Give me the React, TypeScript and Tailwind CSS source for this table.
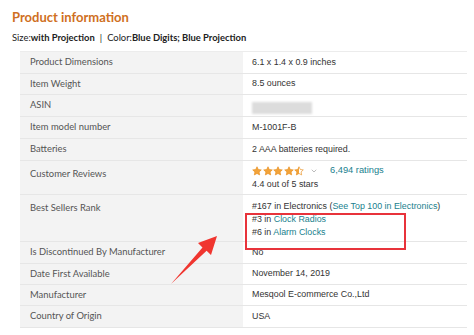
import { ChevronDown } from 'lucide-react'

type Row = { label: string; value: React.ReactNode; h: string }

function Star({ fill }: { fill: number }) {
  const id = `s${Math.round(fill * 100)}`
  return (
    <svg width="10" height="10" viewBox="0 0 24 24">
      <defs>
        <linearGradient id={id}>
          <stop offset={`${fill * 100}%`} stopColor="#f2a33a" />
          <stop offset={`${fill * 100}%`} stopColor="#ffffff" />
        </linearGradient>
      </defs>
      <path
        d="M12 1.8l3.1 6.6 7.2.9-5.3 5 1.4 7.1L12 17.9l-6.4 3.5 1.4-7.1-5.3-5 7.2-.9z"
        fill={`url(#${id})`}
        stroke="#e88f1f"
        strokeWidth="1.6"
        strokeLinejoin="round"
      />
    </svg>
  )
}

const link = 'text-[#1a7f8e]'

export default function App() {
  const rows: Row[] = [
    { label: 'Product Dimensions', value: '6.1 x 1.4 x 0.9 inches', h: 'h-[22px]' },
    { label: 'Item Weight', value: '8.5 ounces', h: 'h-[21px]' },
    {
      label: 'ASIN',
      value: <span className="block w-[60px] h-[12px] mt-[4px] bg-[#dcdcdc] blur-[1px]" />,
      h: 'h-[22px]',
    },
    { label: 'Item model number', value: 'M-1001F-B', h: 'h-[22px]' },
    { label: 'Batteries', value: '2 AAA batteries required.', h: 'h-[22px]' },
    {
      label: 'Customer Reviews',
      value: (
        <div className="pt-[4px]">
          <div className="flex items-center h-[12px]">
            <div className="flex gap-[0.5px]">
              <Star fill={1} />
              <Star fill={1} />
              <Star fill={1} />
              <Star fill={1} />
              <Star fill={0.5} />
            </div>
            <ChevronDown className="w-[8px] h-[8px] text-[#999] ml-[6px]" strokeWidth={2} />
            <span className={`${link} ml-[12px] text-[9.3px]`}>6,494 ratings</span>
          </div>
          <div className="mt-[1px]">4.4 out of 5 stars</div>
        </div>
      ),
      h: 'h-[34px]',
    },
    {
      label: 'Best Sellers Rank',
      value: (
        <div className="pt-[5px] leading-[13px]">
          <div>
            #167 in Electronics (<span className={link}>See Top 100 in Electronics</span>)
          </div>
          <div>
            #3 in <span className={link}>Clock Radios</span>
          </div>
          <div>
            #6 in <span className={link}>Alarm Clocks</span>
          </div>
        </div>
      ),
      h: 'h-[47px]',
    },
    { label: 'Is Discontinued By Manufacturer', value: 'No', h: 'h-[22px]' },
    { label: 'Date First Available', value: 'November 14, 2019', h: 'h-[21px]' },
    { label: 'Manufacturer', value: 'Mesqool E-commerce Co.,Ltd', h: 'h-[21px]' },
    { label: 'Country of Origin', value: 'USA', h: 'h-[22px]' },
  ]

  return (
    <div className="relative w-[474px] h-[335px] bg-white overflow-hidden">
      <div className="pl-[12px] pt-[8px]">
        <h2 className="text-[13px] font-bold text-[#cf6f22] font-['Lato',sans-serif] leading-[18px]">
          Product information
        </h2>
        <div className="mt-[5px] text-[9.4px] text-[#222] font-['Lato',sans-serif] leading-[14px]">
          Size:<b>with Projection</b>
          <span className="mx-[5px]">|</span>
          Color:<b>Blue Digits; Blue Projection</b>
        </div>
      </div>

      <div className="ml-[20px] mt-[6px] w-[447px] border-t border-[#ececec]">
        {rows.map((r) => {
          const multi = r.h === 'h-[34px]' || r.h === 'h-[47px]'
          return (
            <div key={r.label} className={`flex ${r.h} border-b border-[#e6e6e6]`}>
              <div
                className={`w-[223px] bg-[#f3f3f3] pl-[10px] text-[9.4px] text-[#555] font-['Lato',sans-serif] flex ${
                  multi ? 'items-start pt-[6px]' : 'items-center'
                }`}
              >
                {r.label}
              </div>
              <div
                className={`flex-1 pl-[9px] text-[8.9px] text-[#333] whitespace-nowrap font-['Liberation_Sans',Arial,sans-serif] ${
                  multi ? 'block' : 'flex items-center'
                }`}
              >
                {r.value}
              </div>
            </div>
          )
        })}
      </div>

      {/* red highlight box */}
      <div className="absolute left-[245px] top-[213px] w-[161px] h-[37px] border-2 border-[#e8333b]" />

      {/* red arrow */}
      <svg className="absolute left-[160px] top-[226px]" width="70" height="66" viewBox="0 0 70 66">
        <path d="M11 58 L42.5 21.5 L38 17 L57 10 L51 29 L46.6 24.8 Z" fill="#f0352f" />
      </svg>
    </div>
  )
}
